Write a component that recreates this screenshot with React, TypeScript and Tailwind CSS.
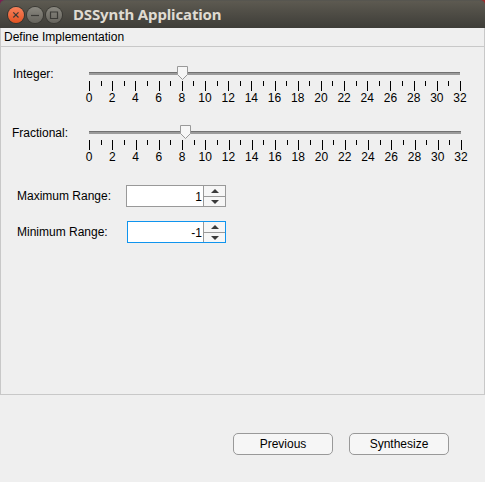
import type { ReactNode } from 'react';

const TICKS = Array.from({ length: 33 }, (_, i) => i);

function WindowButton({ close = false, children }: { close?: boolean; children: ReactNode }) {
  return (
    <button
      className={
        close
          ? 'flex size-[16px] items-center justify-center rounded-full bg-linear-to-b from-[#f7815a] to-[#e2521f] shadow-[0_0_0_1px_#35342f]'
          : 'flex size-[16px] items-center justify-center rounded-full bg-linear-to-b from-[#8a8880] to-[#66645d] shadow-[0_0_0_1px_#3a3934]'
      }
    >
      <svg width="16" height="16" viewBox="0 0 16 16" fill="none" stroke="#3b3a36" strokeWidth="1.2">
        {children}
      </svg>
    </button>
  );
}

function TitleBar() {
  return (
    <header className="flex h-7 items-center bg-linear-to-r from-[#7a2050] to-[#9a2c2c]">
      <div className="flex h-7 w-full items-center rounded-t-[5px] border-t border-[#575650] bg-linear-to-b from-[#5d5a51] to-[#3e3d38] pl-[8px]">
        <div className="flex gap-[3px]">
          <WindowButton close>
            <path d="M5.3 5.3l5.2 5.2M10.5 5.3l-5.2 5.2" />
          </WindowButton>
          <WindowButton>
            <path d="M4 8.5h8" />
          </WindowButton>
          <WindowButton>
            <path d="M4.5 5h7v6.5h-7z" />
          </WindowButton>
        </div>
        <h1 className="-mt-[2px] ml-[11px] whitespace-nowrap font-['Noto_Sans','Open_Sans',sans-serif] text-[15px] leading-[20px] font-bold tracking-[-0.14px] text-[#dfdbd2]">
          DSSynth Application
        </h1>
      </div>
    </header>
  );
}

function Slider({ width, thumb }: { width: number; thumb: number }) {
  return (
    <div style={{ width }} className="h-[41px] shrink-0">
      <div className="relative mt-[6px] h-[3px] border-t border-[#717171] bg-[#9b9b9b]">
        <svg className="absolute -top-[7px]" style={{ left: thumb }} width="12" height="14" viewBox="0 0 12 14">
          <path d="M.5 .5h10v8l-5 5-5-5z" fill="#f6f6f6" stroke="#999" />
        </svg>
      </div>
      <div className="mt-[6px] -mr-px flex justify-between">
        {TICKS.map((t) => (
          <div key={t} className="flex w-px flex-col items-center">
            <span className={t % 2 ? 'h-[5px] w-px bg-black' : 'h-[10px] w-px bg-black'} />
            {t % 2 === 0 && <span className="pr-px leading-[14px]">{t}</span>}
          </div>
        ))}
      </div>
    </div>
  );
}

function SpinBox({ value, focused = false }: { value: string; focused?: boolean }) {
  return (
    <div
      className={
        focused
          ? 'flex h-[22px] w-[99px] border border-[#0f94ee] bg-white'
          : 'flex h-[22px] w-[100px] border border-[#999] bg-white'
      }
    >
      <span className="flex-1 pt-[3px] pr-[1px] text-right leading-[16px]">{value}</span>
      <div className="flex w-[22px] flex-col border-l border-[#999] bg-[#f6f6f6]">
        <button className="flex h-[11px] items-center justify-center border-b border-[#999]">
          <svg width="8" height="4" viewBox="0 0 8 4">
            <path d="M0 4L4 0l4 4z" fill="#3a3a3a" />
          </svg>
        </button>
        <button className="flex h-[9px] items-center justify-center">
          <svg width="8" height="4" viewBox="0 0 8 4">
            <path d="M0 0l4 4 4-4z" fill="#3a3a3a" />
          </svg>
        </button>
      </div>
    </div>
  );
}

function DialogButton({ children }: { children: ReactNode }) {
  return (
    <button className="h-[22px] w-[100px] rounded-[5px] border border-[#999] bg-[#f6f6f6] leading-[20px]">
      {children}
    </button>
  );
}

export default function App() {
  return (
    <div className="flex h-[482px] w-[485px] flex-col overflow-hidden bg-[#efefef] font-['Liberation_Sans',Arial,sans-serif] text-[12px] text-black">
      <TitleBar />
      <main className="flex h-[367px] flex-col border-x border-b border-[#c8c8c8]">
        <h2 className="h-[19px] border-b border-[#c8c8c8] pl-[3px] leading-[18px]">Define Implementation</h2>
        <div className="flex h-[59px] pt-[19px]">
          <label className="w-[88px] pl-3 leading-[16px]">Integer:</label>
          <Slider width={371} thumb={88} />
        </div>
        <div className="flex h-[59px] pt-[19px]">
          <label className="w-[88px] pl-[11px] leading-[16px]">Fractional:</label>
          <Slider width={372} thumb={91} />
        </div>
        <div className="mt-[20px] flex h-[22px]">
          <label className="w-[125px] pl-4 leading-[22px]">Maximum Range:</label>
          <SpinBox value="1" />
        </div>
        <div className="mt-[14px] flex h-[22px]">
          <label className="w-[126px] pl-4 leading-[22px]">Minimum Range:</label>
          <SpinBox value="-1" focused />
        </div>
      </main>
      <footer className="flex justify-end gap-4 pt-[38px] pr-9">
        <DialogButton>Previous</DialogButton>
        <DialogButton>Synthesize</DialogButton>
      </footer>
    </div>
  );
}
